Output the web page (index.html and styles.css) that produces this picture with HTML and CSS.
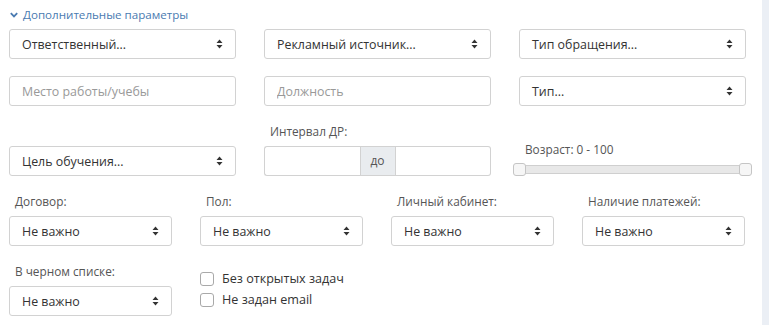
FILE: index.html
```html
<!DOCTYPE html>
<html lang="ru">

<head>
  <meta charset="UTF-8" />
  <meta name="viewport" content="width=device-width, initial-scale=1.0" />
  <title>Фильтр</title>
  <link rel="stylesheet" href="styles.css">
</head>

<body>
  <div class="page">
    <div class="panel">
      <div class="toggle">
        <svg class="chevron" width="8" height="6" viewBox="0 0 8 6"><path d="M0.8 1.2 L4 4.4 L7.2 1.2" fill="none" stroke="currentColor" stroke-width="1.8" /></svg>
        <span>Дополнительные параметры</span>
      </div>

      <div class="grid3">
        <div class="select"><span>Ответственный...</span><svg class="caret" width="7" height="10" viewBox="0 0 7 10"><path d="M3.5 0.5 L6.5 4 L0.5 4 Z M3.5 9.5 L6.5 6 L0.5 6 Z" fill="#333" /></svg></div>
        <div class="select"><span>Рекламный источник...</span><svg class="caret" width="7" height="10" viewBox="0 0 7 10"><path d="M3.5 0.5 L6.5 4 L0.5 4 Z M3.5 9.5 L6.5 6 L0.5 6 Z" fill="#333" /></svg></div>
        <div class="select"><span>Тип обращения...</span><svg class="caret" width="7" height="10" viewBox="0 0 7 10"><path d="M3.5 0.5 L6.5 4 L0.5 4 Z M3.5 9.5 L6.5 6 L0.5 6 Z" fill="#333" /></svg></div>

        <input class="input" type="text" placeholder="Место работы/учебы" />
        <input class="input" type="text" placeholder="Должность" />
        <div class="select"><span>Тип...</span><svg class="caret" width="7" height="10" viewBox="0 0 7 10"><path d="M3.5 0.5 L6.5 4 L0.5 4 Z M3.5 9.5 L6.5 6 L0.5 6 Z" fill="#333" /></svg></div>

        <div class="select"><span>Цель обучения...</span><svg class="caret" width="7" height="10" viewBox="0 0 7 10"><path d="M3.5 0.5 L6.5 4 L0.5 4 Z M3.5 9.5 L6.5 6 L0.5 6 Z" fill="#333" /></svg></div>
        <div class="field">
          <label>Интервал ДР:</label>
          <div class="range-group">
            <input class="input" type="text" />
            <span class="addon">до</span>
            <input class="input" type="text" />
          </div>
        </div>
        <div class="field slider-field">
          <label>Возраст: 0 - 100</label>
          <div class="slider">
            <span class="handle handle-left"></span>
            <span class="handle handle-right"></span>
          </div>
        </div>
      </div>

      <div class="grid4">
        <div class="field">
          <label>Договор:</label>
          <div class="select"><span>Не важно</span><svg class="caret" width="7" height="10" viewBox="0 0 7 10"><path d="M3.5 0.5 L6.5 4 L0.5 4 Z M3.5 9.5 L6.5 6 L0.5 6 Z" fill="#333" /></svg></div>
        </div>
        <div class="field">
          <label>Пол:</label>
          <div class="select"><span>Не важно</span><svg class="caret" width="7" height="10" viewBox="0 0 7 10"><path d="M3.5 0.5 L6.5 4 L0.5 4 Z M3.5 9.5 L6.5 6 L0.5 6 Z" fill="#333" /></svg></div>
        </div>
        <div class="field">
          <label>Личный кабинет:</label>
          <div class="select"><span>Не важно</span><svg class="caret" width="7" height="10" viewBox="0 0 7 10"><path d="M3.5 0.5 L6.5 4 L0.5 4 Z M3.5 9.5 L6.5 6 L0.5 6 Z" fill="#333" /></svg></div>
        </div>
        <div class="field">
          <label>Наличие платежей:</label>
          <div class="select"><span>Не важно</span><svg class="caret" width="7" height="10" viewBox="0 0 7 10"><path d="M3.5 0.5 L6.5 4 L0.5 4 Z M3.5 9.5 L6.5 6 L0.5 6 Z" fill="#333" /></svg></div>
        </div>

        <div class="field">
          <label>В черном списке:</label>
          <div class="select"><span>Не важно</span><svg class="caret" width="7" height="10" viewBox="0 0 7 10"><path d="M3.5 0.5 L6.5 4 L0.5 4 Z M3.5 9.5 L6.5 6 L0.5 6 Z" fill="#333" /></svg></div>
        </div>
        <div class="checks">
          <label class="check"><span class="box"></span>Без открытых задач</label>
          <label class="check"><span class="box"></span>Не задан email</label>
        </div>
      </div>
    </div>
    <div class="side"></div>
  </div>
</body>

</html>
```

FILE: styles.css
```css
body {
  margin: 0;
  background-color: #fff;
  font-family: "Open Sans", "Noto Sans", sans-serif;
  color: #333;
}

.page {
  display: flex;
  height: 325px;
  overflow: hidden;
}

.panel {
  width: 737px;
  padding: 6px 16px 0 9px;
}

.side {
  flex: 1;
  background-color: #ebeff5;
}

.toggle {
  display: flex;
  align-items: center;
  gap: 5px;
  height: 16px;
  margin-left: 1px;
  margin-bottom: 7px;
  color: #4a7bb1;
  font-size: 11.6px;
}

.chevron {
  margin-top: 1px;
}

.grid3 {
  display: grid;
  grid-template-columns: repeat(3, 227px);
  column-gap: 28px;
  row-gap: 17px;
  align-items: end;
}

.grid4 {
  display: grid;
  grid-template-columns: repeat(4, 163px);
  column-gap: 28px;
  row-gap: 17px;
  align-items: end;
  margin-top: 17px;
}

.select,
.input {
  box-sizing: border-box;
  height: 30px;
  border: 1px solid #d2d2d2;
  border-radius: 3px;
  background-color: #fff;
  font-family: inherit;
  font-size: 12.4px;
  color: #333;
}

.select {
  display: flex;
  align-items: center;
  justify-content: space-between;
  padding: 0 12px 0 12px;
}

.input {
  width: 100%;
  padding: 0 12px;
  outline: none;
}

.input::placeholder {
  color: #999;
}

.field {
  display: flex;
  flex-direction: column;
}

.field label {
  height: 16px;
  line-height: 16px;
  margin: 0 0 7px 6px;
  font-size: 11.8px;
  color: #555;
}

.range-group {
  display: flex;
}

.range-group .input {
  flex: 1;
  width: 0;
}

.range-group .input:first-child {
  border-radius: 3px 0 0 3px;
  border-right: none;
}

.range-group .input:last-child {
  border-radius: 0 3px 3px 0;
  border-left: none;
}

.addon {
  box-sizing: border-box;
  width: 36px;
  height: 30px;
  line-height: 28px;
  text-align: center;
  background-color: #e9ecef;
  border: 1px solid #d2d2d2;
  font-size: 12px;
  color: #555;
}

.slider-field {
  padding-bottom: 2px;
}

.slider-field label {
  margin-bottom: 8px;
}

.slider {
  position: relative;
  height: 9px;
  background-color: #e8e8e8;
  border: 1px solid #cfcfcf;
  border-radius: 2px;
  box-sizing: border-box;
}

.handle {
  position: absolute;
  top: -3px;
  width: 13px;
  height: 13px;
  box-sizing: border-box;
  background-color: #f6f6f6;
  border: 1px solid #c5c5c5;
  border-radius: 3px;
}

.handle-left {
  left: -7px;
}

.handle-right {
  right: -7px;
}

.checks {
  align-self: start;
  padding-top: 5px;
}

.check {
  display: flex;
  align-items: center;
  gap: 8px;
  height: 21px;
  font-size: 12.6px;
  color: #333;
}

.box {
  box-sizing: border-box;
  width: 14px;
  height: 14px;
  border: 1px solid #a9a9a9;
  border-radius: 3px;
  background-color: #fff;
}
```
